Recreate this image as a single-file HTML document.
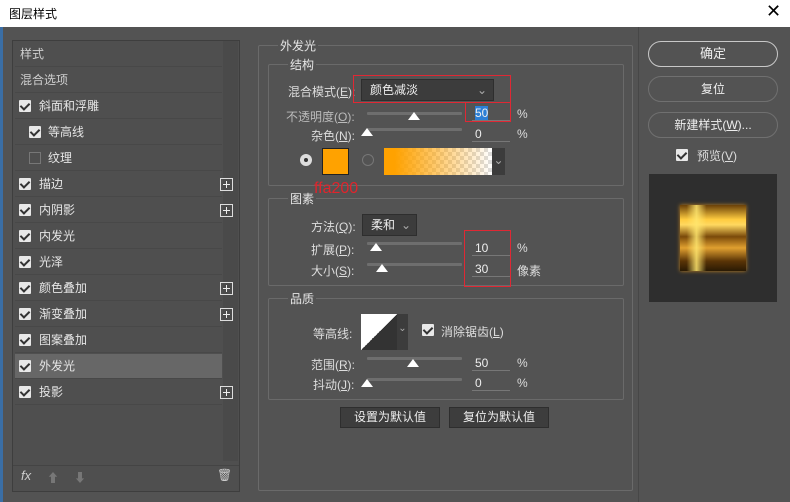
<!DOCTYPE html>
<html><head><meta charset="utf-8"><style>
*{margin:0;padding:0;box-sizing:border-box}
body{width:790px;height:502px;background:#535353;font-family:"Liberation Sans","Noto Sans CJK SC",sans-serif;font-size:12px;color:#e6e6e6;position:relative;overflow:hidden}
.a{position:absolute}
.title{left:0;top:0;width:790px;height:27px;background:#fff;color:#000;font-size:12px}
.row{position:absolute;left:15px;width:207px;height:25px;border-bottom:1px solid #484848;line-height:25px}
.cb{position:absolute;width:12px;height:12px;background:#e8e8e8;border-radius:1px}
.cb:after{content:"";position:absolute;left:3px;top:1px;width:4px;height:7px;border:solid #333;border-width:0 2px 2px 0;transform:rotate(45deg)}
.plus{position:absolute;left:205px;top:6px;width:13px;height:13px;border:1px solid #ddd}
.plus:before{content:"";position:absolute;left:2px;top:5px;width:7px;height:1px;background:#eee}
.plus:after{content:"";position:absolute;left:5px;top:2px;width:1px;height:7px;background:#eee}
.box{position:absolute;border:1px solid #6a6a6a;border-radius:2px}
.lbl{position:absolute;color:#ddd}
.track{position:absolute;height:3px;background:#6e6e6e;border-radius:1px}
.thumb{position:absolute;width:0;height:0;border-left:6px solid transparent;border-right:6px solid transparent;border-bottom:8px solid #fff}
.inp{position:absolute;width:38px;height:16px;border-bottom:1px solid #777;color:#eee;padding-left:3px;line-height:16px}
.btn{position:absolute;left:648px;width:130px;height:26px;border:1px solid #9a9a9a;border-radius:13px;text-align:center;line-height:24px;color:#eee}
.sel{position:absolute;background:#3c3c3c;border:1px solid #2e2e2e;color:#eee;line-height:20px;padding-left:8px}
.sbtn{position:absolute;top:407px;height:21px;background:#3d3d3d;border:1px solid #2e2e2e;text-align:center;line-height:19px;color:#eee}
.red{position:absolute;border:1px solid #e02834;z-index:5}
</style></head><body>
<div class="a title"><span class="a" style="left:9px;top:5px">图层样式</span><span class="a" style="left:766px;top:1px;font-size:18px">✕</span></div>
<div class="a" style="left:0;top:27px;width:3px;height:475px;background:#3a6ea5"></div>
<div class="a" style="left:12px;top:40px;width:228px;height:452px;border:1px solid #3e3e3e;background:#4f4f4f"></div>
<div class="a" style="left:223px;top:41px;width:15px;height:420px;background:#4a4a4a"></div>
<div class="row" style="top:42px;padding-left:5px;color:#cfcfcf">样式</div>
<div class="row" style="top:68px;padding-left:5px;color:#cfcfcf">混合选项</div>
<div class="row" style="top:94px"><div class="cb" style="left:4px;top:6px"></div><span class="a" style="left:24px">斜面和浮雕</span></div>
<div class="row" style="top:120px"><div class="cb" style="left:14px;top:6px"></div><span class="a" style="left:33px">等高线</span></div>
<div class="row" style="top:146px"><div class="a" style="left:14px;top:6px;width:12px;height:12px;border:1px solid #777"></div><span class="a" style="left:33px">纹理</span></div>
<div class="row" style="top:172px"><div class="cb" style="left:4px;top:6px"></div><span class="a" style="left:24px">描边</span><div class="plus"></div></div>
<div class="row" style="top:198px"><div class="cb" style="left:4px;top:6px"></div><span class="a" style="left:24px">内阴影</span><div class="plus"></div></div>
<div class="row" style="top:224px"><div class="cb" style="left:4px;top:6px"></div><span class="a" style="left:24px">内发光</span></div>
<div class="row" style="top:250px"><div class="cb" style="left:4px;top:6px"></div><span class="a" style="left:24px">光泽</span></div>
<div class="row" style="top:276px"><div class="cb" style="left:4px;top:6px"></div><span class="a" style="left:24px">颜色叠加</span><div class="plus"></div></div>
<div class="row" style="top:302px"><div class="cb" style="left:4px;top:6px"></div><span class="a" style="left:24px">渐变叠加</span><div class="plus"></div></div>
<div class="row" style="top:328px"><div class="cb" style="left:4px;top:6px"></div><span class="a" style="left:24px">图案叠加</span></div>
<div class="row" style="top:354px;background:#676767"><div class="cb" style="left:4px;top:6px"></div><span class="a" style="left:24px">外发光</span></div>
<div class="row" style="top:380px"><div class="cb" style="left:4px;top:6px"></div><span class="a" style="left:24px">投影</span><div class="plus"></div></div>
<div class="a" style="left:13px;top:465px;width:226px;height:1px;background:#444"></div>
<span class="a" style="left:21px;top:468px;font-style:italic;color:#ccc;font-size:13px">fx</span>
<span class="a" style="left:47px;top:469px;color:#777">⬆</span><span class="a" style="left:74px;top:469px;color:#777">⬇</span>
<span class="a" style="left:217px;top:468px;color:#ccc">🗑</span>

<div class="box" style="left:258px;top:45px;width:375px;height:446px"></div>
<span class="a" style="left:278px;top:37px;background:#535353;padding:0 2px">外发光</span>
<div class="box" style="left:268px;top:64px;width:356px;height:122px"></div>
<span class="a" style="left:288px;top:56px;background:#535353;padding:0 2px">结构</span>
<span class="lbl" style="left:288px;top:83px">混合模式(<u>E</u>):</span>
<div class="sel" style="left:361px;top:79px;width:133px;height:22px">颜色减淡<span class="a" style="right:6px;top:0;color:#aaa">⌄</span></div>
<div class="red" style="left:353px;top:75px;width:158px;height:28px"></div>
<span class="lbl" style="left:286px;top:108px;color:#bbb">不透明度(<u>O</u>):</span>
<div class="track" style="left:367px;top:112px;width:95px"></div><div class="thumb" style="left:408px;top:112px"></div>
<div class="inp" style="left:472px;top:105px"><span style="background:#2d7fd6">50</span></div>
<div class="red" style="left:465px;top:102px;width:46px;height:20px"></div>
<span class="lbl" style="left:517px;top:107px">%</span>
<span class="lbl" style="left:311px;top:127px">杂色(<u>N</u>):</span>
<div class="track" style="left:367px;top:128px;width:95px"></div><div class="thumb" style="left:361px;top:128px"></div>
<div class="inp" style="left:472px;top:126px">0</div><span class="lbl" style="left:517px;top:127px">%</span>
<div class="a" style="left:300px;top:154px;width:12px;height:12px;border-radius:50%;background:#ddd"><div class="a" style="left:4px;top:4px;width:4px;height:4px;border-radius:50%;background:#333"></div></div>
<div class="a" style="left:322px;top:148px;width:27px;height:27px;background:#ffa200;border:1px solid #222"></div>
<div class="a" style="left:362px;top:154px;width:12px;height:12px;border-radius:50%;border:1px solid #777"></div>
<div class="a" style="left:384px;top:148px;width:108px;height:27px;background:linear-gradient(90deg,#ffa200 10%,rgba(255,162,0,0)),repeating-conic-gradient(#ddd 0 25%,#fff 0 50%) 0 0/8px 8px"></div>
<div class="a" style="left:492px;top:148px;width:13px;height:27px;background:#3c3c3c;color:#aaa;text-align:center;line-height:24px">⌄</div>
<span class="a" style="left:314px;top:180px;color:#e0242c;font-size:16px;z-index:6">ffa200</span>

<div class="box" style="left:268px;top:198px;width:356px;height:88px"></div>
<span class="a" style="left:288px;top:190px;background:#535353;padding:0 2px">图素</span>
<span class="lbl" style="left:311px;top:218px">方法(<u>Q</u>):</span>
<div class="sel" style="left:362px;top:214px;width:55px;height:22px">柔和<span class="a" style="right:5px;top:0;color:#aaa">⌄</span></div>
<span class="lbl" style="left:311px;top:241px">扩展(<u>P</u>):</span>
<div class="track" style="left:367px;top:242px;width:95px"></div><div class="thumb" style="left:370px;top:243px"></div>
<div class="inp" style="left:472px;top:240px">10</div><span class="lbl" style="left:517px;top:241px">%</span>
<span class="lbl" style="left:311px;top:262px">大小(<u>S</u>):</span>
<div class="track" style="left:367px;top:263px;width:95px"></div><div class="thumb" style="left:376px;top:264px"></div>
<div class="inp" style="left:472px;top:261px">30</div><span class="lbl" style="left:517px;top:262px">像素</span>
<div class="red" style="left:464px;top:230px;width:47px;height:57px"></div>

<div class="box" style="left:268px;top:298px;width:356px;height:102px"></div>
<span class="a" style="left:288px;top:290px;background:#535353;padding:0 2px">品质</span>
<span class="lbl" style="left:313px;top:325px">等高线:</span>
<div class="a" style="left:361px;top:314px;width:36px;height:36px;background:linear-gradient(to bottom right,#fff 50%,#333 50%)"></div>
<div class="a" style="left:397px;top:314px;width:11px;height:36px;background:#3c3c3c;color:#aaa;line-height:30px;text-align:center;font-size:10px">⌄</div>
<div class="cb" style="left:422px;top:324px"></div>
<span class="lbl" style="left:441px;top:323px">消除锯齿(<u>L</u>)</span>
<span class="lbl" style="left:311px;top:356px">范围(<u>R</u>):</span>
<div class="track" style="left:367px;top:357px;width:95px"></div><div class="thumb" style="left:407px;top:359px"></div>
<div class="inp" style="left:472px;top:355px">50</div><span class="lbl" style="left:517px;top:356px">%</span>
<span class="lbl" style="left:313px;top:376px">抖动(<u>J</u>):</span>
<div class="track" style="left:367px;top:378px;width:95px"></div><div class="thumb" style="left:361px;top:379px"></div>
<div class="inp" style="left:472px;top:375px">0</div><span class="lbl" style="left:517px;top:376px">%</span>
<div class="sbtn" style="left:340px;width:100px">设置为默认值</div>
<div class="sbtn" style="left:449px;width:100px">复位为默认值</div>

<div class="a" style="left:638px;top:27px;width:1px;height:475px;background:#474747"></div>
<div class="btn" style="top:41px;border-color:#c8c8c8;font-size:13px">确定</div>
<div class="btn" style="top:76px;border-color:#707070">复位</div>
<div class="btn" style="top:112px;border-color:#707070">新建样式(<u>W</u>)...</div>
<div class="cb" style="left:676px;top:149px"></div>
<span class="lbl" style="left:697px;top:147px">预览(<u>V</u>)</span>
<div class="a" style="left:649px;top:174px;width:128px;height:128px;background:#2e2e2e"></div>
<div class="a" style="left:680px;top:205px;width:66px;height:66px;background:linear-gradient(90deg,transparent 10%,rgba(255,230,110,.85) 25%,transparent 40%,transparent 100%),linear-gradient(180deg,#6a4008 0%,#ffcc40 22%,#ffd860 30%,#7a4a0a 48%,#e0a030 65%,#5a3406 85%,#2a1a04 100%);box-shadow:0 0 4px #c08020"></div>
</body></html>
